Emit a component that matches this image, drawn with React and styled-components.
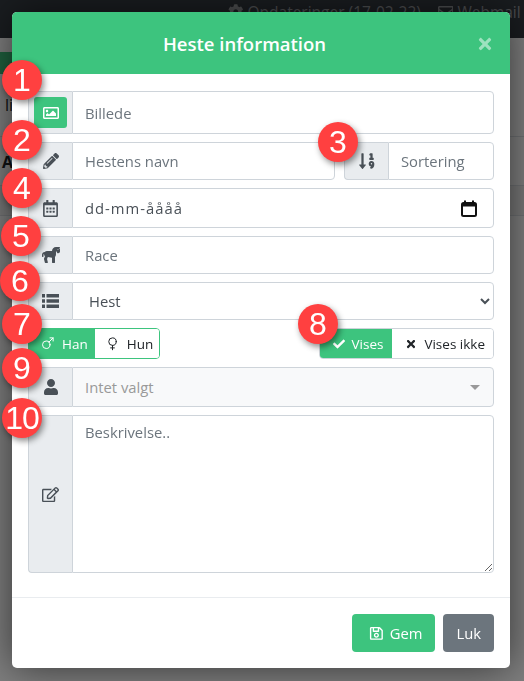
import React from 'react';
import styled, { createGlobalStyle } from 'styled-components';
import {
  FaCog, FaRegEnvelope, FaRegImage, FaPencilAlt, FaSortNumericDown, FaRegCalendarAlt, FaHorse,
  FaCheck, FaTimes, FaUser, FaRegEdit, FaRegSave,
} from 'react-icons/fa';
import { Mars, Venus } from 'lucide-react';

const GREEN = '#3dc47e';
const FONT = `'Open Sans', 'Noto Sans', sans-serif`;

const GlobalStyle = createGlobalStyle`
  html, body { margin: 0; height: 100%; overflow: hidden; background: #fff; }
  * { box-sizing: border-box; }
  body { font-family: ${FONT}; font-size: 14.8px; color: #212529; }
`;

// what is behind the modal
const Page = styled.div`
  height: 100vh;
  background: #fff;
`;
const Nav = styled.div`
  height: 38px;
  background: #343a40;
  color: #9a9da0;
  display: flex;
  gap: 17px;
  padding: 1px 0 0 228px;
  font-size: 15.5px;
  white-space: nowrap;
`;
const NavItem = styled.span`
  display: flex;
  gap: 4px;
  height: 22px;
  align-items: center;
`;
const Content = styled.div`
  padding-top: 14px;
`;
const GreenBar = styled.div`
  height: 22px;
  width: 60px;
  background: ${GREEN};
  margin-bottom: 20px;
`;
const PageText = styled.div`
  padding: ${(p) => p.$top}px 0 0 ${(p) => p.$left}px;
  font-size: 16px;
  height: ${(p) => p.$h}px;
  font-weight: ${(p) => (p.$bold ? 700 : 400)};
  border-bottom: 1px solid #dee2e6;
`;
const Stripe = styled.div`
  height: 30px;
  background: #f2f2f2;
  border-bottom: 1px solid #dee2e6;
`;

const Backdrop = styled.div`
  position: fixed;
  inset: 0;
  background: rgba(0, 0, 0, 0.5);
  padding: 12px;
`;
const Modal = styled.div`
  position: relative;
  width: 498px;
  background: #fff;
  border-radius: 5px;
  box-shadow: 0 0 40px rgba(0, 0, 0, 0.6);
`;
const Header = styled.div`
  height: 62px;
  background: ${GREEN};
  border-radius: 5px 5px 0 0;
  display: flex;
  align-items: center;
  padding: 1px 16px 0;
  color: #fff;
`;
const Title = styled.div`
  flex: 1;
  text-align: center;
  font-size: 18.5px;
  font-weight: 600;
`;
const Close = styled.div`
  width: 33px;
  display: flex;
  justify-content: flex-end;
  color: rgba(255, 255, 255, 0.5);
  font-size: 18px;
`;
const Body = styled.div`
  padding: 17px 16px 24px;
  display: flex;
  flex-direction: column;
  gap: 8px;
`;
const Row = styled.div`
  display: flex;
  justify-content: space-between;
  gap: 9px;
`;
const Group = styled.div`
  display: flex;
  flex: ${(p) => (p.$width ? `0 0 ${p.$width}px` : '1 1 auto')};
  height: ${(p) => p.$h || 38}px;
  min-width: 0;
`;
const Addon = styled.div`
  flex: 0 0 44px;
  display: flex;
  align-items: center;
  justify-content: center;
  background: #e9ecef;
  border: 1px solid #ced4da;
  border-right: 0;
  border-radius: 4px 0 0 4px;
  color: #495057;
  font-size: ${(p) => p.$size || 16}px;
`;
const UploadButton = styled.div`
  width: 33px;
  height: 31px;
  border-radius: 3px;
  background: ${GREEN};
  color: #fff;
  display: flex;
  align-items: center;
  justify-content: center;
  font-size: 16px;
`;
const Input = styled.input`
  flex: 1;
  width: 100%;
  min-width: 0;
  border: 1px solid #ced4da;
  border-radius: 0 4px 4px 0;
  padding: 6px 12px;
  font: inherit;
  color: #495057;
  background: #fff;
  &::placeholder { color: #6c757d; opacity: 1; }
`;
const DateField = styled.div`
  flex: 1;
  display: flex;
  align-items: center;
  justify-content: space-between;
  border: 1px solid #ced4da;
  border-radius: 0 4px 4px 0;
  padding: 0 16px 0 12px;
  color: #495057;
  letter-spacing: 1px;
`;
const Select = styled.select`
  flex: 1;
  border: 1px solid #ced4da;
  border-radius: 0 4px 4px 0;
  padding: 6px 12px;
  font: inherit;
  color: #495057;
  background-color: #fff;
`;
const ReadonlySelect = styled.div`
  flex: 1;
  display: flex;
  align-items: center;
  justify-content: space-between;
  background: #f8f9fa;
  border: 1px solid #ced4da;
  border-radius: 0 4px 4px 0;
  padding: 0 12px;
  color: #999;
`;
const Caret = styled.span`
  border-left: 5px solid transparent;
  border-right: 5px solid transparent;
  border-top: 5px solid #999;
  margin-right: 1px;
`;
const Textarea = styled.textarea`
  flex: 1;
  border: 1px solid #ced4da;
  border-radius: 0 4px 4px 0;
  padding: 6px 12px;
  font: inherit;
  color: #495057;
  &::placeholder { color: #6c757d; opacity: 1; }
`;
const Toggle = styled.div`
  display: flex;
  height: 31px;
  border-radius: 4px;
  border: 1px solid ${(p) => p.$border};
  overflow: hidden;
`;
const ToggleItem = styled.div`
  display: flex;
  align-items: center;
  gap: 7px;
  padding: 0 ${(p) => p.$right || 8}px 0 ${(p) => p.$left || 13}px;
  font-size: 13.5px;
  background: ${(p) => (p.$active ? GREEN : '#fff')};
  color: ${(p) => (p.$active ? '#fff' : '#212529')};
`;
const Footer = styled.div`
  border-top: 1px solid #e9ecef;
  padding: 16px;
  display: flex;
  justify-content: flex-end;
  gap: 8px;
`;
const Button = styled.div`
  height: 38px;
  display: flex;
  align-items: center;
  gap: 6px;
  padding: 0 13px 0 ${(p) => p.$left || 13}px;
  border-radius: 4px;
  color: #fff;
  background: ${(p) => p.$bg};
`;
const Badge = styled.div`
  position: absolute;
  left: ${(p) => p.$x - 32}px;
  top: ${(p) => p.$y - 32}px;
  width: 40px;
  height: 40px;
  border-radius: 50%;
  background: #ff4040;
  color: #fff;
  font: 32px 'Liberation Sans', Arial, sans-serif;
  letter-spacing: ${(p) => (p.$n > 9 ? '-1px' : 0)};
  display: flex;
  align-items: center;
  justify-content: center;
  box-shadow: 2px 3px 6px rgba(0, 0, 0, 0.45);
`;

const badges = [
  [1, 22, 80], [2, 22, 140], [3, 338, 142], [4, 22, 188], [5, 21, 236],
  [6, 20, 281], [7, 22, 324], [8, 318, 324], [9, 22, 368], [10, 22, 418],
];

const CalendarGlyph = () => (
  <svg width="16" height="17" viewBox="0 0 16 17" fill="none" stroke="#111" strokeWidth="2">
    <rect x="1" y="3" width="14" height="13" rx="1.5" />
    <path d="M1 5h14" strokeWidth="3" />
    <path d="M4 0.5v2M12 0.5v2" />
  </svg>
);

const ListGlyph = () => (
  <svg width="17" height="14" viewBox="0 0 17 14" fill="currentColor">
    <path d="M0 0h3v3.5H0zM4.5 0H17v3.5H4.5zM0 5.2h3v3.5H0zM4.5 5.2H17v3.5H4.5zM0 10.4h3v3.5H0zM4.5 10.4H17v3.5H4.5z" />
  </svg>
);

const App = () => (
  <>
    <GlobalStyle />
    <Page>
      <Nav>
        <NavItem><FaCog /> Opdateringer (17-02-22)</NavItem>
        <NavItem><FaRegEnvelope /> Webmail</NavItem>
      </Nav>
      <Content>
        <GreenBar />
        <PageText $h={43} $top={0} $left={5}>li</PageText>
        <PageText $h={49} $top={14} $left={2} $bold>A</PageText>
        <Stripe />
      </Content>
    </Page>
    <Backdrop>
      <Modal>
        <Header>
          <Title>Heste information</Title>
          <Close><FaTimes /></Close>
        </Header>
        <Body>
          <Group $h={43}>
            <Addon><UploadButton><FaRegImage /></UploadButton></Addon>
            <Input placeholder="Billede" />
          </Group>
          <Row>
            <Group>
              <Addon><FaPencilAlt /></Addon>
              <Input placeholder="Hestens navn" />
            </Group>
            <Group $width={150}>
              <Addon $size={18}><FaSortNumericDown /></Addon>
              <Input placeholder="Sortering" />
            </Group>
          </Row>
          <Group $h={40}>
            <Addon $size={17}><FaRegCalendarAlt /></Addon>
            <DateField>dd-mm-åååå <CalendarGlyph /></DateField>
          </Group>
          <Group>
            <Addon $size={18}><FaHorse /></Addon>
            <Input placeholder="Race" />
          </Group>
          <Group>
            <Addon><ListGlyph /></Addon>
            <Select defaultValue="Hest"><option>Hest</option></Select>
          </Group>
          <Row>
            <Toggle $border={GREEN}>
              <ToggleItem $active $left={11} $right={7}><Mars size={15} strokeWidth={1.6} /> Han</ToggleItem>
              <ToggleItem $left={10} $right={6}><Venus size={15} strokeWidth={1.6} /> Hun</ToggleItem>
            </Toggle>
            <Toggle $border="#ced4da">
              <ToggleItem $active $right={9}><FaCheck size={12} /> Vises</ToggleItem>
              <ToggleItem><FaTimes size={12} /> Vises ikke</ToggleItem>
            </Toggle>
          </Row>
          <Group $h={40}>
            <Addon><FaUser /></Addon>
            <ReadonlySelect>Intet valgt <Caret /></ReadonlySelect>
          </Group>
          <Group $h={158}>
            <Addon $size={17}><FaRegEdit /></Addon>
            <Textarea placeholder="Beskrivelse.." />
          </Group>
        </Body>
        <Footer>
          <Button $bg={GREEN} $left={17}><FaRegSave /> Gem</Button>
          <Button $bg="#6c757d">Luk</Button>
        </Footer>
        {badges.map(([n, x, y]) => (
          <Badge key={n} $n={n} $x={x} $y={y}>{n}</Badge>
        ))}
      </Modal>
    </Backdrop>
  </>
);

export default App;
